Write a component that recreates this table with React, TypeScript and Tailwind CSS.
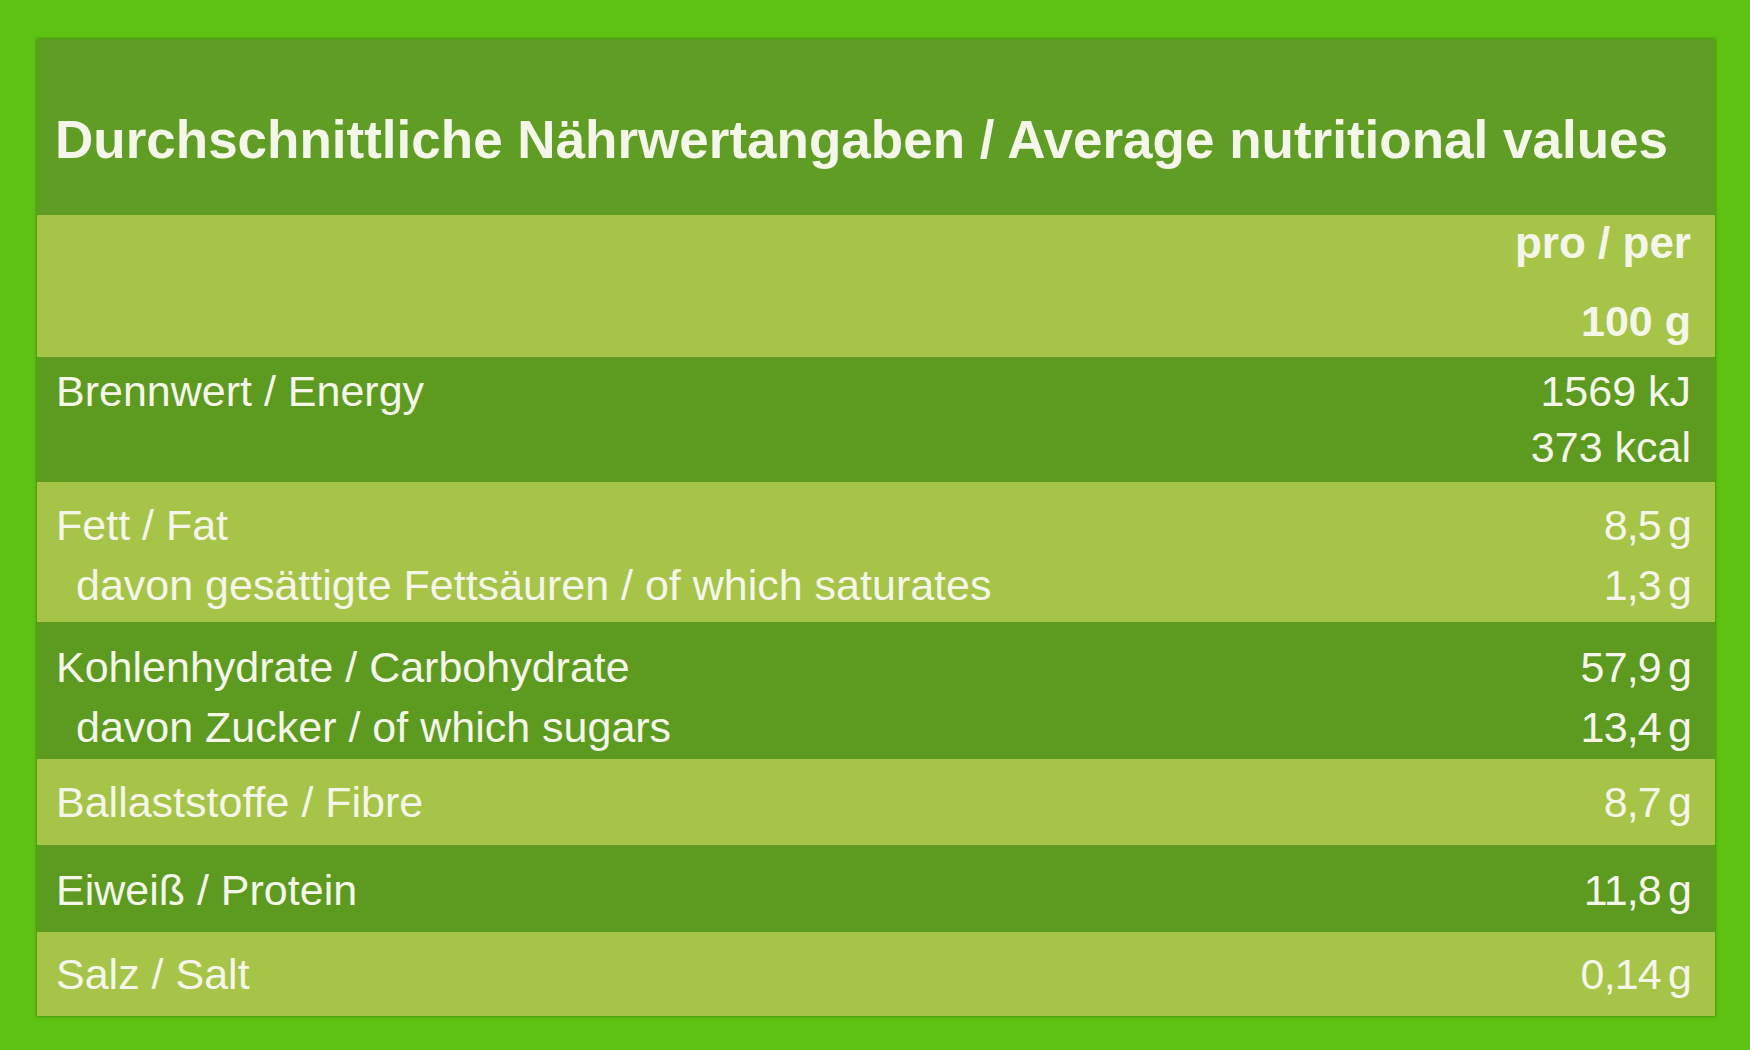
const rows = [
  {
    lines: [
      { label: "Brennwert / Energy", value: "1569 kJ", indent: false },
      { label: "", value: "373 kcal", indent: false },
    ],
    dark: true,
    height: "h-[125px]",
    pad: "pt-[6px] leading-[56px]",
  },
  {
    lines: [
      { label: "Fett / Fat", value: "8,5 g", indent: false },
      { label: "davon gesättigte Fettsäuren / of which saturates", value: "1,3 g", indent: true },
    ],
    dark: false,
    height: "h-[140px]",
    pad: "pt-[13px] leading-[60px]",
  },
  {
    lines: [
      { label: "Kohlenhydrate / Carbohydrate", value: "57,9 g", indent: false },
      { label: "davon Zucker / of which sugars", value: "13,4 g", indent: true },
    ],
    dark: true,
    height: "h-[137px]",
    pad: "pt-[15px] leading-[60px]",
  },
  {
    lines: [{ label: "Ballaststoffe / Fibre", value: "8,7 g", indent: false }],
    dark: false,
    height: "h-[86px]",
    pad: "pt-[13px] leading-[60px]",
  },
  {
    lines: [{ label: "Eiweiß / Protein", value: "11,8 g", indent: false }],
    dark: true,
    height: "h-[87px]",
    pad: "pt-[15px] leading-[60px]",
  },
  {
    lines: [{ label: "Salz / Salt", value: "0,14 g", indent: false }],
    dark: false,
    height: "h-[84px]",
    pad: "pt-[12px] leading-[60px]",
  },
];

export default function App() {
  return (
    <div className="flex h-[1050px] w-[1750px] bg-[#5ec212] pb-[34px] pl-[37px] pr-[35px] pt-[39px] font-['Liberation_Sans',Arial,sans-serif] text-[#f5f6ea]">
      <div className="flex flex-1 flex-col shadow-[0_0_3px_rgba(20,60,0,0.6)]">
        <div className="h-[176px] bg-[#609d24] pl-[18px] pt-[74px]">
          <h1 className="text-[53px] font-bold leading-none">
            Durchschnittliche Nährwertangaben / Average nutritional values
          </h1>
        </div>

        <div className="flex h-[142px] flex-col items-end bg-[#a6c447] pr-[24px] pt-[6px] text-[44px] font-bold leading-none">
          <span>pro / per</span>
          <span className="mt-[35px] text-[43px]">100 g</span>
        </div>

        {rows.map((row, i) => (
          <div
            key={i}
            className={`${row.height} ${row.pad} pl-[19px] pr-[24px] text-[43px] ${
              row.dark ? "bg-[#5d9a20]" : "bg-[#a6c447]"
            }`}
          >
            {row.lines.map((line, j) => (
              <div key={j} className="flex justify-between">
                <span className={line.indent ? "pl-[20px]" : ""}>{line.label}</span>
                <span className={line.value.endsWith(" g") ? "tracking-[-0.02em] [word-spacing:-4px]" : ""}>
                  {line.value}
                </span>
              </div>
            ))}
          </div>
        ))}
      </div>
    </div>
  );
}
